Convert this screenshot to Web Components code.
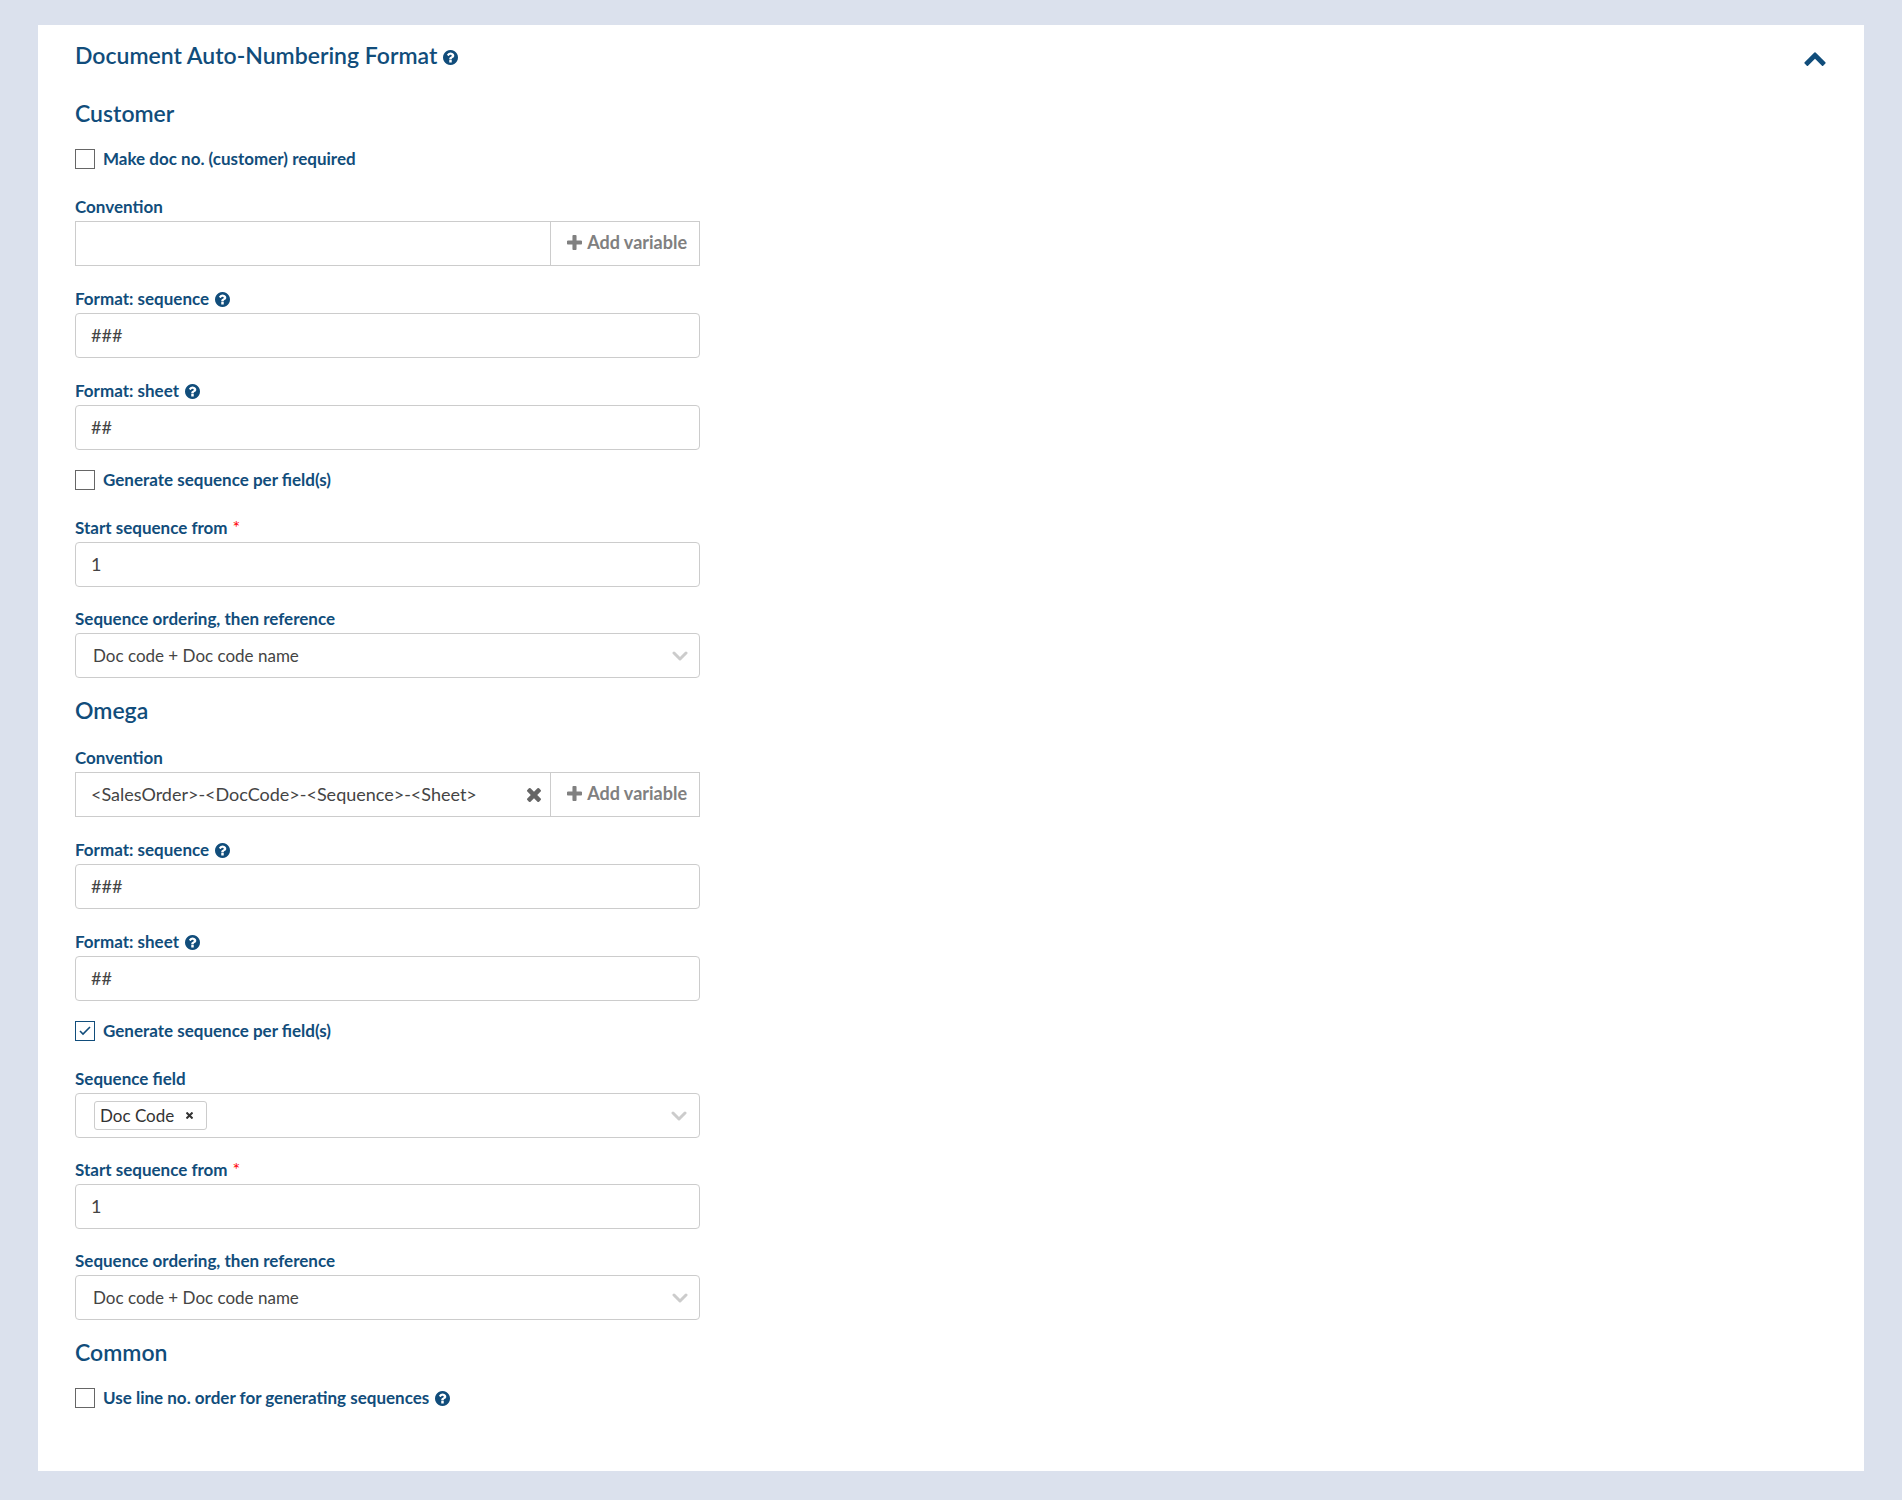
<!DOCTYPE html>
<html lang="en">
<head>
<meta charset="utf-8">
<title>Document Auto-Numbering Format</title>
<style>
  body {
    margin: 0;
    min-height: 100vh;
    box-sizing: border-box;
    padding: 25px 38px 29px;
    background: #dbe1ed;
    font-family: Lato, "Open Sans", sans-serif;
    font-size: 18px;
    color: #444;
    --ink: #114d7b;
    --line: #ccc;
  }
  check-field + text-field, check-field + tag-field, check-field + variable-field { margin-top: 24px; }
</style>
</head>
<body>
<settings-panel heading="Document Auto-Numbering Format">
  <form-section heading="Customer">
    <check-field label="Make doc no. (customer) required"></check-field>
    <variable-field label="Convention"></variable-field>
    <text-field label="Format: sequence" value="###" help></text-field>
    <text-field label="Format: sheet" value="##" help></text-field>
    <check-field label="Generate sequence per field(s)"></check-field>
    <text-field label="Start sequence from" value="1" required></text-field>
    <select-field label="Sequence ordering, then reference" value="Doc code + Doc code name"></select-field>
  </form-section>
  <form-section heading="Omega">
    <variable-field label="Convention" value="&lt;SalesOrder&gt;-&lt;DocCode&gt;-&lt;Sequence&gt;-&lt;Sheet&gt;"></variable-field>
    <text-field label="Format: sequence" value="###" help></text-field>
    <text-field label="Format: sheet" value="##" help></text-field>
    <check-field label="Generate sequence per field(s)" checked></check-field>
    <tag-field label="Sequence field" value="Doc Code"></tag-field>
    <text-field label="Start sequence from" value="1" required></text-field>
    <select-field label="Sequence ordering, then reference" value="Doc code + Doc code name"></select-field>
  </form-section>
  <form-section heading="Common">
    <check-field label="Use line no. order for generating sequences" help></check-field>
  </form-section>
</settings-panel>
<script>
const ICONS = {
  up: ['90 454 1612 1062', 'M1683 1331l-166 165q-19 19-45 19t-45-19l-531-531-531 531q-19 19-45 19t-45-19l-166-165q-19-19-19-45.5t19-45.5l742-741q19-19 45-19t45 19l742 741q19 19 19 45.5t-19 45.5z'],
  plus: ['192 128 1408 1408', 'M1600 736v192q0 40-28 68t-68 28h-416v416q0 40-28 68t-68 28h-192q-40 0-68-28t-28-68v-416h-416q-40 0-68-28t-28-68v-192q0-40 28-68t68-28h416v-416q0-40 28-68t68-28h192q40 0 68 28t28 68v416h416q40 0 68 28t28 68z'],
  times: ['302 366 1188 1188', 'M1490 1322q0 40-28 68l-136 136q-28 28-68 28t-68-28l-294-294-294 294q-28 28-68 28t-68-28l-136-136q-28-28-28-68t28-68l294-294-294-294q-28-28-28-68t28-68l136-136q28-28 68-28t68 28l294 294 294-294q28-28 68-28t68 28l136 136q28 28 28 68t-28 68l-294 294 294 294q28 28 28 68z'],
  help: ['128 128 1536 1536', 'M1024 1376v-192q0-14-9-23t-23-9h-192q-14 0-23 9t-9 23v192q0 14 9 23t23 9h192q14 0 23-9t9-23zm256-672q0-88-55.5-163t-138.5-116-170-41q-243 0-371 213-15 24 8 42l132 100q7 6 19 6 16 0 25-12 53-68 86-92 34-24 86-24 48 0 85.5 26t37.5 59q0 38-20 61t-68 45q-63 28-115.5 86.5t-52.5 125.5v36q0 14 9 23t23 9h192q14 0 23-9t9-23q0-19 21.5-49.5t54.5-49.5q32-18 49-28.5t46-35 44.5-48 28-60.5 12.5-81zm384 192q0 209-103 385.5t-279.5 279.5-385.5 103-385.5-103-279.5-279.5-103-385.5 103-385.5 279.5-279.5 385.5-103 385.5 103 279.5 279.5 103 385.5z']
};
const svg = (name, w, h = w) =>
  `<svg width="${w}" height="${h}" viewBox="${ICONS[name][0]}" fill="currentColor" aria-hidden="true"><path d="${ICONS[name][1]}"/></svg>`;
const chevron = `<svg class="chevron" width="16" height="10" viewBox="0 0 16 10" fill="none" stroke="#ccc" stroke-width="3" stroke-linecap="round" stroke-linejoin="round" aria-hidden="true"><path d="M2 2l6 6 6-6"/></svg>`;
const esc = s => s.replace(/&/g, '&amp;').replace(/</g, '&lt;').replace(/"/g, '&quot;');

const BASE = `
  *, *::before { box-sizing: border-box; }
  svg { display: block; flex: none; }
  button { margin: 0; padding: 0; border: 0; background: none; font: inherit; color: inherit; cursor: pointer; }
`;
const FIELD = BASE + `
  :host { display: block; max-width: 625px; margin-top: 20px; }
  :host([help]) { margin-top: 21px; }
  .label { display: flex; align-items: center; gap: 6px; padding-bottom: 2px; color: var(--ink); font-size: 17px; font-weight: 700; line-height: 24px; }
  .star { margin-left: 5px; color: #f00; font-size: 18px; line-height: 20px; font-weight: 400; }
  input, select { width: 100%; height: 45px; margin: 0; border: 1px solid var(--line); border-radius: 4px; padding: 0 15px 2px; background: #fff; color: #444; font: inherit; outline-color: var(--ink); }
  .box { display: grid; align-items: center; }
  .box > * { grid-area: 1 / 1; }
  .chevron { justify-self: end; margin-right: 12px; pointer-events: none; }
`;

class BaseElement extends HTMLElement {
  get label() { return esc(this.getAttribute('label') || ''); }
  get value() { return esc(this.getAttribute('value') || ''); }
  get help() { return this.hasAttribute('help') ? '<help-icon></help-icon>' : ''; }
  get labelRow() {
    const star = this.hasAttribute('required') ? '<span class="star">*</span>' : '';
    return `<div class="label"><label for="control">${this.label}${star}</label>${this.help}</div>`;
  }
  connectedCallback() {
    if (!this.shadowRoot) this.attachShadow({ mode: 'open' }).innerHTML = this.render();
  }
}

customElements.define('help-icon', class extends BaseElement {
  render() {
    return `<style>${BASE} :host { display: block; color: var(--ink); } button { display: block; }</style>
      <button type="button" aria-label="Help">${svg('help', 15)}</button>`;
  }
});

customElements.define('settings-panel', class extends BaseElement {
  render() {
    return `<style>${BASE}
      :host { display: block; padding: 14px 37px 61px; background: #fff; }
      header { display: flex; align-items: center; justify-content: space-between; color: var(--ink); margin-bottom: 26px; }
      .title { display: flex; align-items: center; gap: 6px; }
      .title help-icon { padding-top: 4px; }
      .toggle { padding: 8px 1px 0 0; }
      h1 { margin: 0; font-size: 23px; line-height: 32px; font-weight: 600; }
    </style>
    <header>
      <div class="title"><h1>${esc(this.getAttribute('heading'))}</h1><help-icon></help-icon></div>
      <button class="toggle" type="button" aria-label="Collapse">${svg('up', 22, 14)}</button>
    </header>
    <slot></slot>`;
  }
});

customElements.define('form-section', class extends BaseElement {
  render() {
    return `<style>${BASE}
      :host { display: block; }
      :host(:not(:first-child)) { margin-top: 16px; }
      h2 { margin: 0; color: var(--ink); font-size: 23px; line-height: 32px; font-weight: 600; }
    </style><h2>${esc(this.getAttribute('heading'))}</h2><slot></slot>`;
  }
});

customElements.define('text-field', class extends BaseElement {
  render() {
    return `<style>${FIELD}</style>${this.labelRow}<div class="box"><input id="control" type="text" value="${this.value}"></div>`;
  }
});

customElements.define('variable-field', class extends BaseElement {
  render() {
    const clear = this.value ? `<button class="clear" type="button" aria-label="Clear">${svg('times', 14)}</button>` : '';
    return `<style>${FIELD}
      .group { display: flex; }
      .box { flex: 1; }
      input { border-radius: 0; border-right: 0; }
      .clear { justify-self: end; margin-right: 9px; color: #666; }
      .add { display: flex; align-items: center; gap: 5px; height: 45px; border: 1px solid var(--line); padding: 0 12px 3px 16px; color: #808080; font-weight: 700; }
    </style>${this.labelRow}
    <div class="group">
      <div class="box"><input id="control" type="text" value="${this.value}">${clear}</div>
      <button class="add" type="button">${svg('plus', 15)}Add variable</button>
    </div>`;
  }
});

customElements.define('select-field', class extends BaseElement {
  render() {
    return `<style>${FIELD} select { appearance: none; padding: 0 17px 1px; font-size: 17px; }</style>${this.labelRow}
      <div class="box"><select id="control"><option>${this.value}</option></select>${chevron}</div>`;
  }
});

customElements.define('tag-field', class extends BaseElement {
  render() {
    return `<style>${FIELD}
      .box { display: flex; height: 45px; border: 1px solid var(--line); border-radius: 4px; padding-left: 18px; }
      .tag { display: flex; align-items: center; gap: 12px; height: 29px; border: 1px solid var(--line); border-radius: 3px; padding: 0 13px 0 5px; color: #333; font-size: 17px; }
      input { flex: 1; width: 0; height: 43px; border: 0; background: none; }
    </style>${this.labelRow}
    <div class="box">
      <span class="tag">${this.value}<button type="button" aria-label="Remove ${this.value}">
        <svg width="7" height="7" viewBox="0 0 7 7" fill="none" stroke="currentColor" stroke-width="2" aria-hidden="true"><path d="M0.500 0.500l6 6M6.500 0.500l-6 6"/></svg></button></span>
      <input id="control" type="text" role="combobox" aria-expanded="false">${chevron}
    </div>`;
  }
});

customElements.define('check-field', class extends BaseElement {
  render() {
    return `<style>${BASE}
      :host { display: flex; align-items: center; gap: 6px; margin-top: 18px; color: var(--ink); font-size: 17px; font-weight: 700; line-height: 24px; }
      label { display: flex; align-items: center; gap: 8px; }
      .box { display: grid; place-items: center; }
      .box > * { grid-area: 1 / 1; }
      input { appearance: none; width: 20px; height: 20px; margin: 0; border: 1px solid #666; background: #fff; }
      input:checked { border-color: var(--ink); }
      svg { display: none; pointer-events: none; }
      input:checked + svg { display: block; }
    </style>
    <label><span class="box"><input type="checkbox" ${this.hasAttribute('checked') ? 'checked' : ''}>
      <svg width="12" height="10" viewBox="0 0 12 10" fill="none" stroke="currentColor" stroke-width="1.600" aria-hidden="true"><path d="M1 5l3 3L11 1"/></svg></span>${this.label}</label>${this.help}`;
  }
});
</script>
</body>
</html>
